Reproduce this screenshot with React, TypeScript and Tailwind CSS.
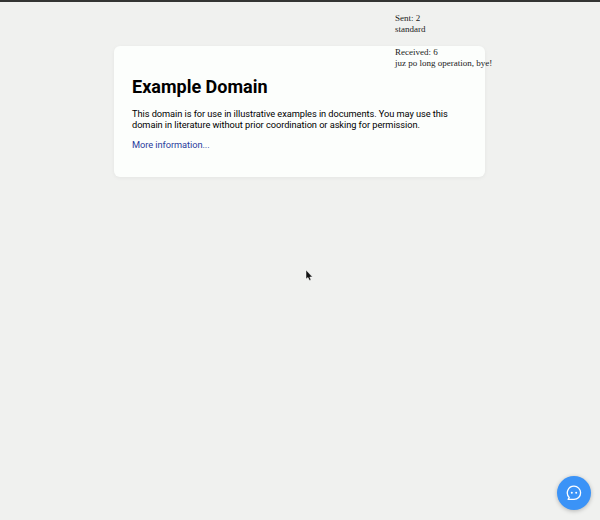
export default function App() {
  return (
    <div className="relative h-[520px] w-[600px] overflow-hidden bg-[#f0f1ef] font-['Roboto',sans-serif]">
      <div className="h-[2px] bg-[#333533]" />

      <div className="ml-[114px] mt-[44px] h-[131px] w-[371px] rounded-[6px] bg-[#fcfefc] px-[18px] pt-[29px] shadow-[0_1px_4px_rgba(0,0,0,0.05)]">
        <h1 className="text-[18px] font-bold leading-[24px] text-black">Example Domain</h1>
        <p className="mt-[9px] whitespace-nowrap text-[9.25px] leading-[11px] tracking-[-0.06px] text-black">
          This domain is for use in illustrative examples in documents. You may use this
          <br />
          domain in literature without prior coordination or asking for permission.
        </p>
        <p className="mt-[9px] text-[9.25px] leading-[11px] tracking-[-0.06px]">
          <a href="#" className="text-[#2a3c9c]">More information...</a>
        </p>
      </div>

      <div className="absolute left-[395px] top-[13px] font-['Liberation_Serif',serif] text-[9px] leading-[11.25px] text-[#222]">
        <div>Sent: 2</div>
        <div>standard</div>
        <div className="mt-[11.25px]">Received: 6</div>
        <div>juz po long operation, bye!</div>
      </div>

      <svg className="absolute left-[305px] top-[269px]" width="9" height="13" viewBox="0 0 9 13">
        <path d="M1 1 L1 10 L3 8.5 L4.5 11.5 L6 11 L4.8 8 L7.5 8 Z" fill="#111" stroke="#fff" strokeWidth="0.5" />
      </svg>

      <button className="absolute left-[557px] top-[476px] flex h-[34px] w-[34px] items-center justify-center rounded-full bg-[#3b93f7] shadow-[0_1px_4px_rgba(0,0,0,0.25)]">
        <svg width="16" height="16" viewBox="0 0 16 16" fill="none">
          <path d="M8 1.2 A6.6 6.6 0 1 1 8 14.4 H2.2 L3.2 12.4 A6.6 6.6 0 0 1 8 1.2 Z" stroke="#fff" strokeWidth="1.3" strokeLinejoin="round" />
          <circle cx="5.8" cy="7.8" r="1" fill="#fff" />
          <circle cx="10.2" cy="7.8" r="1" fill="#fff" />
        </svg>
      </button>
    </div>
  );
}
